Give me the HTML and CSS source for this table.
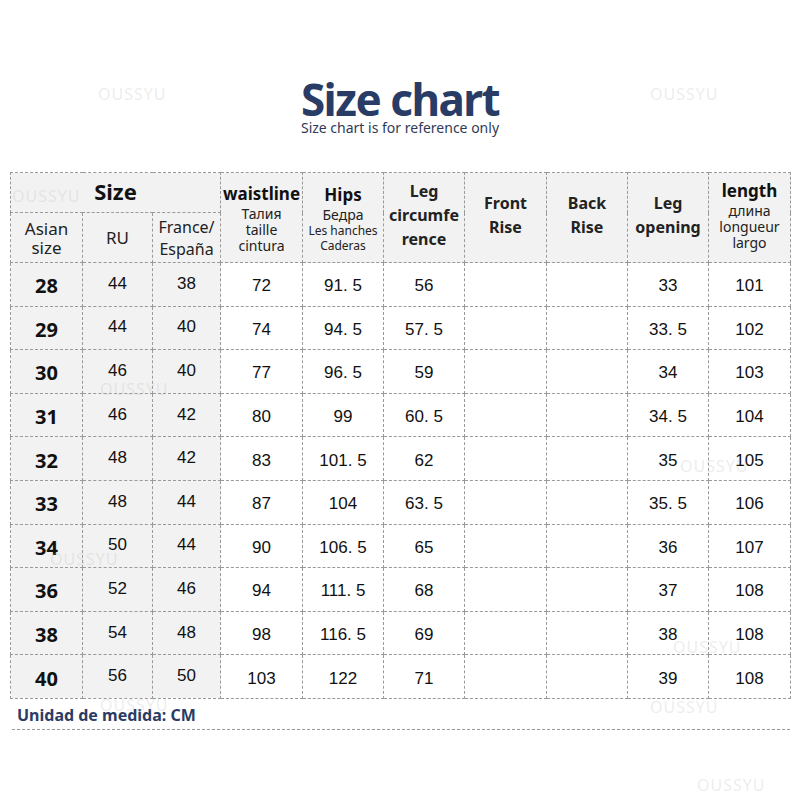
FILE: index.html
```html
<!DOCTYPE html>
<html>
<head>
<meta charset="utf-8">
<link rel="stylesheet" href="styles.css">
</head>
<body>
<div class="page">
  <header class="head">
    <h1 class="title">Size chart</h1>
    <p class="sub">Size chart is for reference only</p>
  </header>
  <table class="chart">
    <colgroup>
      <col style="width:72px"><col style="width:70px"><col style="width:68px"><col style="width:82px"><col style="width:81px"><col style="width:81px"><col style="width:82px"><col style="width:81px"><col style="width:81px"><col style="width:82px">
    </colgroup>
    <thead>
      <tr class="h1">
        <th colspan="3" class="size-h">Size</th>
        <th rowspan="2" class="ml"><b class="b17">waistline</b><span class="s14">Талия<br>taille<br>cintura</span></th>
        <th rowspan="2" class="ml"><b class="b17">Hips</b><span class="s14">Бедра</span><span class="s12">Les hanches<br>Caderas</span></th>
        <th rowspan="2" class="ml bb">Leg<br>circumfe<br>rence</th>
        <th rowspan="2" class="ml bb">Front<br>Rise</th>
        <th rowspan="2" class="ml bb">Back<br>Rise</th>
        <th rowspan="2" class="ml bb">Leg<br>opening</th>
        <th rowspan="2" class="ml lenh"><b class="b17">length</b><span class="s14">длина<br>longueur<br>largo</span></th>
      </tr>
      <tr class="h2">
        <th class="reg">Asian<br>size</th>
        <th class="reg">RU</th>
        <th class="reg f16">France/<br>España</th>
      </tr>
    </thead>
    <tbody>
      <tr><td class="sz">28</td><td class="g up">44</td><td class="g up">38</td><td>72</td><td>91. 5</td><td>56</td><td></td><td></td><td>33</td><td>101</td></tr>
      <tr><td class="sz">29</td><td class="g up">44</td><td class="g up">40</td><td>74</td><td>94. 5</td><td>57. 5</td><td></td><td></td><td>33. 5</td><td>102</td></tr>
      <tr><td class="sz">30</td><td class="g up">46</td><td class="g up">40</td><td>77</td><td>96. 5</td><td>59</td><td></td><td></td><td>34</td><td>103</td></tr>
      <tr><td class="sz">31</td><td class="g up">46</td><td class="g up">42</td><td>80</td><td>99</td><td>60. 5</td><td></td><td></td><td>34. 5</td><td>104</td></tr>
      <tr><td class="sz">32</td><td class="g up">48</td><td class="g up">42</td><td>83</td><td>101. 5</td><td>62</td><td></td><td></td><td>35</td><td>105</td></tr>
      <tr><td class="sz">33</td><td class="g up">48</td><td class="g up">44</td><td>87</td><td>104</td><td>63. 5</td><td></td><td></td><td>35. 5</td><td>106</td></tr>
      <tr><td class="sz">34</td><td class="g up">50</td><td class="g up">44</td><td>90</td><td>106. 5</td><td>65</td><td></td><td></td><td>36</td><td>107</td></tr>
      <tr><td class="sz">36</td><td class="g up">52</td><td class="g up">46</td><td>94</td><td>111. 5</td><td>68</td><td></td><td></td><td>37</td><td>108</td></tr>
      <tr><td class="sz">38</td><td class="g up">54</td><td class="g up">48</td><td>98</td><td>116. 5</td><td>69</td><td></td><td></td><td>38</td><td>108</td></tr>
      <tr><td class="sz">40</td><td class="g up">56</td><td class="g up">50</td><td>103</td><td>122</td><td>71</td><td></td><td></td><td>39</td><td>108</td></tr>
    </tbody>
  </table>
  <p class="unit">Unidad de medida: CM</p>

  <span class="wm" style="left:98px;top:83px">OUSSYU</span>
  <span class="wm" style="left:650px;top:83px">OUSSYU</span>
  <span class="wm" style="left:12px;top:185px">OUSSYU</span>
  <span class="wm" style="left:100px;top:378px">OUSSYU</span>
  <span class="wm" style="left:680px;top:455px">OUSSYU</span>
  <span class="wm" style="left:50px;top:548px">OUSSYU</span>
  <span class="wm" style="left:673px;top:636px">OUSSYU</span>
  <span class="wm" style="left:100px;top:694px">OUSSYU</span>
  <span class="wm" style="left:650px;top:696px">OUSSYU</span>
  <span class="wm" style="left:697px;top:774px">OUSSYU</span>
</div>
</body>
</html>
```

FILE: styles.css
```css
html, body {
  margin: 0;
  padding: 0;
  background: #fff;
}
.page {
  position: relative;
  width: 800px;
  height: 800px;
  overflow: hidden;
  font-family: "Noto Sans", "Open Sans", sans-serif;
  color: #111;
}
.head {
  display: flex;
  flex-direction: column;
  align-items: center;
  padding-top: 77px;
  height: 172px;
  box-sizing: border-box;
}
.title {
  margin: 0;
  font-family: "Noto Sans", sans-serif;
  font-weight: 700;
  font-size: 44px;
  line-height: 44px;
  letter-spacing: -1.5px;
  color: #293c66;
}
.sub {
  margin: -1px 0 0;
  font-size: 14px;
  line-height: 16px;
  letter-spacing: 0;
  color: #2e3b58;
}
.chart {
  margin-left: 10px;
  width: 780px;
  table-layout: fixed;
  border-collapse: collapse;
}
.chart th, .chart td {
  border: 1px dashed #9a9a9a;
  padding: 0;
  text-align: center;
  vertical-align: middle;
}
.chart thead th {
  background: #f2f2f2;
  font-weight: 400;
}
.h1 { height: 40px; }
.h2 { height: 50px; }
.size-h {
  font-weight: 700 !important;
  font-size: 22px;
  padding-bottom: 3px !important;
}
.ml {
  line-height: 1.1;
}
.lenh { padding-bottom: 6px !important; }
.b17 {
  display: block;
  font-weight: 700;
  font-size: 17px;
  line-height: 24px;
}
.s14 {
  display: block;
  font-size: 14px;
  line-height: 16px;
  color: #222;
}
.s12 {
  display: block;
  font-size: 12px;
  line-height: 15px;
  color: #222;
}
.bb {
  font-weight: 700 !important;
  font-size: 16px;
  line-height: 24px;
  color: #222;
  padding-bottom: 5px !important;
}
.reg {
  font-size: 17px;
  line-height: 19px;
  color: #222;
}
.f16 { font-size: 16px; line-height: 22px; }
tbody tr { height: 43.6px; }
tbody td {
  font-family: "Liberation Sans", Arial, sans-serif;
  font-size: 17px;
  color: #111;
  padding-top: 4px !important;
}
td.sz {
  background: #f2f2f2;
  font-family: "Noto Sans", sans-serif;
  font-weight: 700;
  font-size: 20px;
  padding-top: 3px !important;
}
td.g { background: #f2f2f2; }
td.up {
  padding-top: 0 !important;
  padding-bottom: 1px !important;
}
.unit {
  margin: 0 10px 0 12px;
  padding: 6px 0 4px 5px;
  font-family: "Noto Sans", sans-serif;
  font-weight: 700;
  font-size: 16px;
  line-height: 20px;
  color: #2b3c64;
  border-bottom: 1px dashed #9a9a9a;
}
.wm {
  position: absolute;
  font-family: "Noto Sans", sans-serif;
  font-size: 16px;
  letter-spacing: 1px;
  color: rgba(180, 180, 180, 0.25);
  pointer-events: none;
}
```
